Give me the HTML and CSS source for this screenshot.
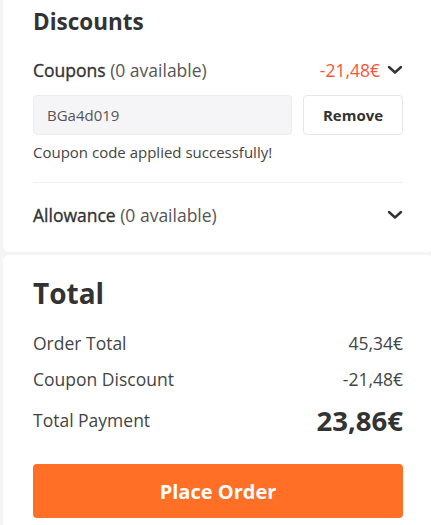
FILE: index.html
```html
<!DOCTYPE html>
<html>
<head>
<meta charset="utf-8">
<link rel="stylesheet" href="styles.css">
</head>
<body>
<div class="page">
  <section class="card card-discounts">
    <h2 class="title-sm">Discounts</h2>
    <div class="row-head">
      <div class="label"><span class="strong">Coupons</span> (0 available)</div>
      <div class="right">
        <span class="red">-21,48€</span>
        <svg class="chev" width="16" height="10" viewBox="0 0 16 10"><path d="M2 2 L8 7.5 L14 2" fill="none" stroke="#333" stroke-width="2.4" stroke-linecap="round" stroke-linejoin="round"/></svg>
      </div>
    </div>
    <div class="coupon">
      <div class="code">BGa4d019</div>
      <button class="remove">Remove</button>
    </div>
    <p class="ok">Coupon code applied successfully!</p>
    <div class="divider"></div>
    <div class="row-head row-allow">
      <div class="label"><span class="strong">Allowance</span> (0 available)</div>
      <div class="right">
        <svg class="chev" width="16" height="10" viewBox="0 0 16 10"><path d="M2 2 L8 7.5 L14 2" fill="none" stroke="#333" stroke-width="2.4" stroke-linecap="round" stroke-linejoin="round"/></svg>
      </div>
    </div>
  </section>
  <section class="card card-total">
    <h2 class="title-lg">Total</h2>
    <div class="line line-first"><span>Order Total</span><span>45,34€</span></div>
    <div class="line"><span>Coupon Discount</span><span>-21,48€</span></div>
    <div class="line line-pay"><span>Total Payment</span><span class="big">23,86€</span></div>
    <button class="place">Place Order</button>
  </section>
</div>
</body>
</html>
```
FILE: styles.css
```css
html, body {
  margin: 0;
  padding: 0;
  background: #f5f5f7;
  overflow: hidden;
  font-family: "Open Sans", "Noto Sans", sans-serif;
  color: #333;
}
.page {
  display: flex;
  flex-direction: column;
  gap: 3px;
  width: 430px;
  margin-left: 3px;
}
.card {
  background: #fff;
  padding: 0 30px;
}
.card-discounts {
  border-radius: 0 0 6px 6px;
  height: 252px;
  box-sizing: border-box;
}
.card-total {
  border-radius: 6px 6px 0 0;
  height: 270px;
  box-sizing: border-box;
}
.title-sm {
  margin: 0;
  font-size: 22.5px;
  font-weight: 700;
  line-height: 30px;
  padding-top: 7px;
}
.row-head {
  display: flex;
  justify-content: space-between;
  align-items: center;
  height: 24px;
  margin-top: 21px;
  font-size: 17.5px;
}
.label {
  color: #555;
}
.strong {
  color: #333;
  font-weight: 400;
  -webkit-text-stroke: 0.35px #333;
}
.right {
  display: flex;
  align-items: center;
  gap: 7px;
}
.red {
  color: #f5553a;
}
.chev {
  display: block;
}
.coupon {
  display: flex;
  gap: 11px;
  margin-top: 13px;
  height: 40px;
}
.code {
  flex: 1;
  box-sizing: border-box;
  background: #f5f5f7;
  border: 1px solid #ececee;
  border-radius: 4px;
  font-size: 15px;
  color: #555;
  padding: 0 13px;
  display: flex;
  align-items: center;
}
.remove {
  width: 100px;
  box-sizing: border-box;
  background: #fff;
  border: 1px solid #e6e6e8;
  border-radius: 4px;
  font-family: inherit;
  font-size: 15px;
  font-weight: 700;
  color: #333;
}
.ok {
  margin: 6px 0 0;
  font-size: 15px;
  line-height: 22px;
  color: #444;
}
.divider {
  height: 1px;
  background: #f0f0f0;
  margin-top: 19px;
}
.row-allow {
  margin-top: 20px;
}
.title-lg {
  margin: 0;
  font-size: 28px;
  font-weight: 700;
  line-height: 36px;
  padding-top: 20px;
}
.line {
  display: flex;
  justify-content: space-between;
  align-items: center;
  font-size: 17.5px;
  color: #444;
  height: 24px;
  margin-top: 12px;
}
.line-first {
  margin-top: 20px;
}
.line-pay {
  height: 36px;
  margin-top: 11px;
}
.big {
  font-size: 27.5px;
  font-weight: 700;
  color: #333;
}
.place {
  display: block;
  width: 100%;
  height: 54px;
  margin-top: 26px;
  background: #ff6f26;
  color: #fff;
  border: none;
  border-radius: 4px;
  font-family: inherit;
  font-size: 20px;
  font-weight: 700;
}
```
